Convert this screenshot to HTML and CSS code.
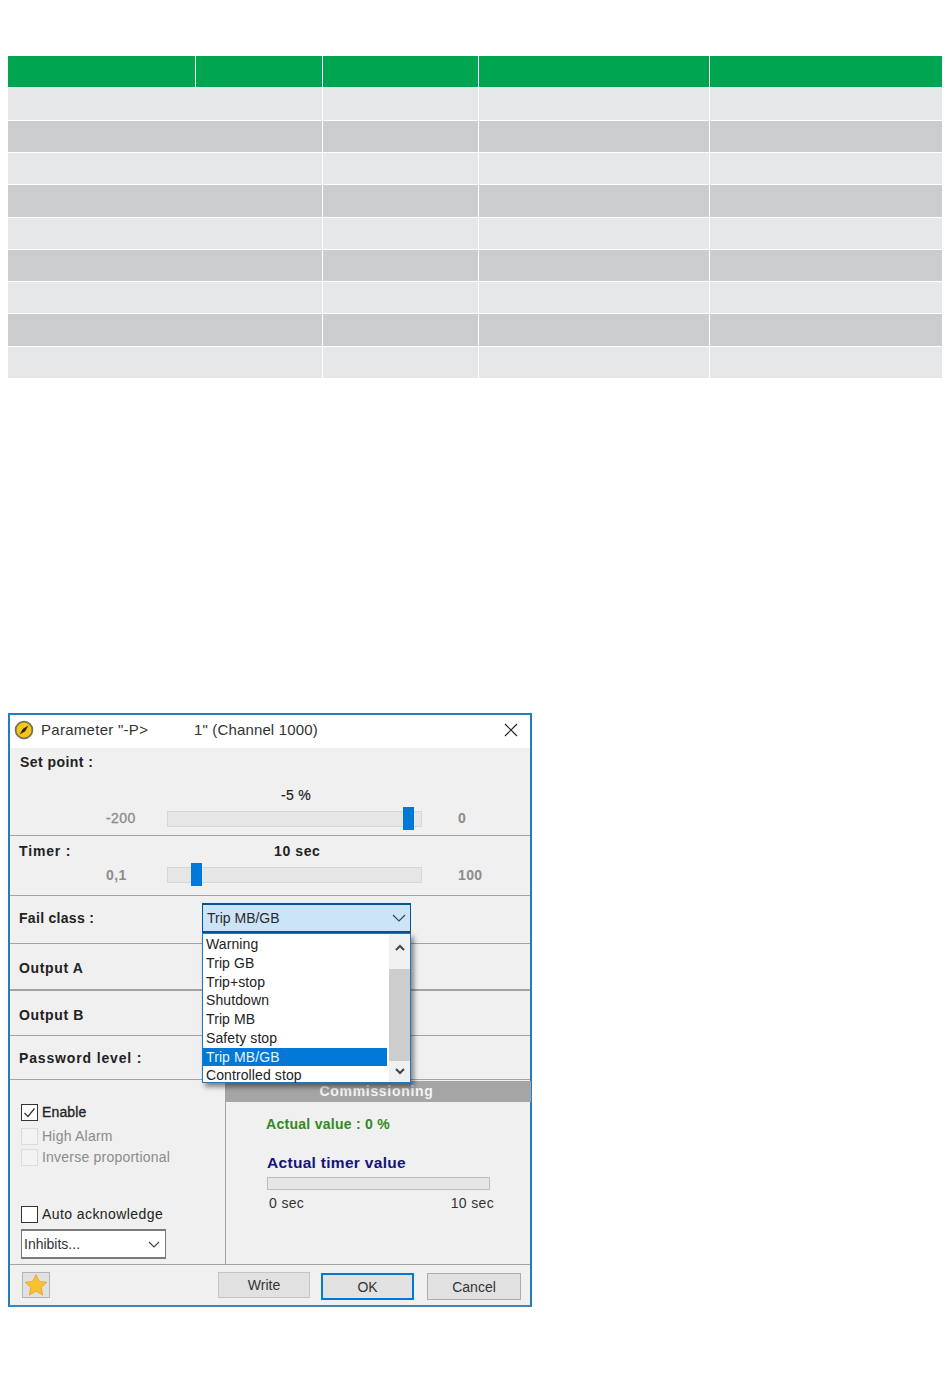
FILE: index.html
```html
<!DOCTYPE html>
<html lang="en">
<head>
<meta charset="utf-8">
<title>Parameter dialog</title>
<link rel="stylesheet" href="styles.css">
</head>
<body>
<table class="grid-table">
  <colgroup><col class="c1"><col class="c2"><col class="c3"><col class="c4"><col class="c5"></colgroup>
  <thead><tr class="h-row"><th></th><th></th><th></th><th></th><th></th></tr></thead>
  <tbody>
    <tr class="r-a h34"><td colspan="2"></td><td></td><td></td><td></td></tr>
    <tr class="r-b h32"><td colspan="2"></td><td></td><td></td><td></td></tr>
    <tr class="r-a h32"><td colspan="2"></td><td></td><td></td><td></td></tr>
    <tr class="r-b h33"><td colspan="2"></td><td></td><td></td><td></td></tr>
    <tr class="r-a h32"><td colspan="2"></td><td></td><td></td><td></td></tr>
    <tr class="r-b h32"><td colspan="2"></td><td></td><td></td><td></td></tr>
    <tr class="r-a h32"><td colspan="2"></td><td></td><td></td><td></td></tr>
    <tr class="r-b h33"><td colspan="2"></td><td></td><td></td><td></td></tr>
    <tr class="r-a h31"><td colspan="2"></td><td></td><td></td><td></td></tr>
  </tbody>
</table>

<section class="dialog">
  <header class="titlebar">
    <svg class="app-icon" width="20" height="20" viewBox="0 0 20 20" aria-hidden="true">
      <circle cx="10" cy="10" r="8.4" fill="#f5c518" stroke="#7a705c" stroke-width="1.8"/>
      <path d="M14.4 5.4 L9 8.8 L5.6 14.6 L11.2 11.2 Z" fill="#2a2418"/>
    </svg>
    <span class="title-a">Parameter "-P&gt;</span>
    <span class="title-b">1" (Channel 1000)</span>
    <svg class="close" width="14" height="14" viewBox="0 0 14 14" aria-hidden="true">
      <path d="M1 1 L13 13 M13 1 L1 13" stroke="#222" stroke-width="1.2" fill="none"/>
    </svg>
  </header>

  <div class="sec sec-setpoint">
    <div class="lbl ls-set">Set point :</div>
    <div class="value-top">-5 %</div>
    <div class="slider-row">
      <span class="min">-200</span>
      <div class="track"><span class="thumb thumb-setpoint"></span></div>
      <span class="max">0</span>
    </div>
  </div>

  <div class="sec sec-timer">
    <div class="timer-head">
      <div class="lbl lbl-tight ls-timer">Timer :</div>
      <div class="value-timer">10 sec</div>
    </div>
    <div class="slider-row">
      <span class="min min-b">0,1</span>
      <div class="track"><span class="thumb thumb-timer"></span></div>
      <span class="max">100</span>
    </div>
  </div>

  <div class="sec sec-row sec-fail">
    <div class="lbl lbl-tight lbl-col ls-fail">Fail class :</div>
    <div class="select-wrap">
      <div class="select-open">
        <span>Trip MB/GB</span>
        <svg width="14" height="8" viewBox="0 0 14 8" aria-hidden="true"><path d="M1 1 L7 7 L13 1" stroke="#33475a" stroke-width="1.2" fill="none"/></svg>
      </div>
      <div class="list">
        <ul class="items">
          <li>Warning</li>
          <li>Trip GB</li>
          <li>Trip+stop</li>
          <li>Shutdown</li>
          <li>Trip MB</li>
          <li>Safety stop</li>
          <li class="sel">Trip MB/GB</li>
          <li>Controlled stop</li>
        </ul>
        <div class="scroll">
          <svg class="sb-up" width="10" height="7" viewBox="0 0 10 7" aria-hidden="true"><path d="M1 6 L5 2 L9 6" stroke="#444" stroke-width="2" fill="none"/></svg>
          <div class="sb-thumb"></div>
          <svg class="sb-down" width="10" height="7" viewBox="0 0 10 7" aria-hidden="true"><path d="M1 1 L5 5 L9 1" stroke="#444" stroke-width="2" fill="none"/></svg>
        </div>
      </div>
    </div>
  </div>

  <div class="sec sec-row sec-a"><div class="lbl lbl-tight ls-out">Output A</div></div>
  <div class="sec sec-row sec-b"><div class="lbl lbl-tight ls-out">Output B</div></div>
  <div class="sec sec-row sec-pw"><div class="lbl lbl-tight ls-pw">Password level :</div></div>

  <div class="lower">
    <div class="lower-left">
      <label class="check"><span class="box"><svg width="15" height="15" viewBox="0 0 15 15" aria-hidden="true"><path d="M2.5 8 L6 11.5 L12.5 3.5" stroke="#333" stroke-width="1.2" fill="none"/></svg></span><span class="check-text strong">Enable</span></label>
      <label class="check off check-alarm"><span class="box"></span><span class="check-text">High Alarm</span></label>
      <label class="check off check-inv"><span class="box"></span><span class="check-text">Inverse proportional</span></label>
      <label class="check check-auto"><span class="box"></span><span class="check-text">Auto acknowledge</span></label>
      <div class="inhibits">
        <span>Inhibits...</span>
        <svg width="12" height="7" viewBox="0 0 12 7" aria-hidden="true"><path d="M1 1 L6 6 L11 1" stroke="#444" stroke-width="1.2" fill="none"/></svg>
      </div>
    </div>
    <div class="lower-right">
      <div class="comm-head">Commissioning</div>
      <div class="comm-body">
        <div class="actual">Actual value : 0 %</div>
        <div class="timer-title">Actual timer value</div>
        <div class="progress"></div>
        <div class="progress-labels"><span>0 sec</span><span>10 sec</span></div>
      </div>
    </div>
  </div>

  <footer class="footer">
    <button class="star-btn" type="button" aria-label="Favourite">
      <svg width="24" height="24" viewBox="0 0 24 24" aria-hidden="true"><path d="M12 1.5 L15.2 8.4 L22.8 9.3 L17.2 14.5 L18.7 22 L12 18.2 L5.3 22 L6.8 14.5 L1.2 9.3 L8.8 8.4 Z" fill="#f9c22e" stroke="#e8a93a" stroke-width="1"/></svg>
    </button>
    <button class="btn btn-write" type="button">Write</button>
    <button class="btn btn-ok" type="button">OK</button>
    <button class="btn btn-cancel" type="button">Cancel</button>
  </footer>
</section>
</body>
</html>
```
FILE: styles.css
```css
* { box-sizing: border-box; }
html, body { margin: 0; padding: 0; background: #fff; }
body {
  padding: 56px 8px 0;
  height: 1387px;
  overflow: hidden;
  font-family: "Liberation Sans", Arial, sans-serif;
  font-size: 14px;
  color: #222;
}

/* table */
.grid-table { width: 934px; border-collapse: separate; border-spacing: 0; table-layout: fixed; }
.c1 { width: 188px; }
.c2 { width: 127px; }
.c3 { width: 156px; }
.c4 { width: 231px; }
.c5 { width: 232px; }
.grid-table th, .grid-table td { padding: 0; border-right: 1px solid #fff; border-bottom: 1px solid #fff; }
.grid-table th:last-child, .grid-table td:last-child { border-right: 0; }
.h-row th { background: #00a551; height: 31px; border-bottom: 0; }
.r-a td { background: #e6e7e8; }
.r-b td { background: #cbcccd; }
.h34 td { height: 34px; }
.h33 td { height: 33px; }
.h32 td { height: 32px; }
.h31 td { height: 31px; border-bottom: 0; }

/* dialog */
.dialog {
  position: relative;
  width: 524px;
  height: 594px;
  margin-top: 335px;
  background: #f0f0f0;
  border: 2px solid #1f7dc0;
  border-bottom-color: #3c85b8;
  display: flex;
  flex-direction: column;
}
.titlebar {
  height: 33px;
  background: #fff;
  display: flex;
  align-items: center;
  flex: none;
  padding: 0 10px 4px 4px;
  font-size: 15px;
  color: #333;
}
.app-icon { flex: none; margin-right: 7px; }
.title-a { width: 153px; letter-spacing: .28px; white-space: nowrap; }
.title-b { flex: 1; letter-spacing: .15px; white-space: nowrap; }
.close { flex: none; margin-right: 2px; }

.sec { border-bottom: 1px solid #a3a3a3; flex: none; padding-left: 10px; }
.lbl { font-weight: 700; letter-spacing: .55px; color: #222; line-height: 16px; }
.lbl-tight { margin-left: -1px; }
.ls-set { letter-spacing: .45px; }
.ls-timer { letter-spacing: .85px; }
.ls-fail { letter-spacing: .3px; }
.ls-out { letter-spacing: .65px; }
.ls-pw { letter-spacing: .85px; }

.sec-setpoint { height: 88px; padding-top: 6px; }
.sec-setpoint .min, .sec-setpoint .max { padding-bottom: 2px; }
.value-top { width: 0; margin-left: 276px; line-height: 16px; margin-top: 17px; white-space: nowrap; display: flex; justify-content: center; letter-spacing: .3px; -webkit-text-stroke: .2px #222; }
.sec-timer { height: 60px; padding-top: 7px; }
.timer-head { display: flex; }
.timer-head .lbl { width: 255px; }
.value-timer { font-weight: 700; letter-spacing: .6px; line-height: 16px; }

.slider-row {
  display: grid;
  grid-template-columns: 147px 255px 1fr;
  grid-template-rows: 16px;
  height: 16px;
  align-items: center;
  margin-top: 8px;
  color: #8c8c8c;
  font-weight: 700;
  letter-spacing: .4px;
}
.min { padding-left: 86px; font-weight: 400; -webkit-text-stroke: .3px #8c8c8c; }
.min-b { font-weight: 700; -webkit-text-stroke: 0; }
.max { padding-left: 36px; }
.track { position: relative; height: 16px; background: #e6e6e6; border: 1px solid #d6d6d6; }
.thumb { position: absolute; top: -5px; width: 11px; height: 23px; background: #0078d7; }
.thumb-setpoint { left: 235px; }
.thumb-timer { left: 23px; }

.sec-row { display: flex; align-items: center; }
.sec-fail { height: 48px; }
.lbl-col { width: 182px; flex: none; margin-right: 1px; margin-top: -4px; }
.sec-a { height: 47px; border-bottom: 2px solid #a3a3a3; padding-top: 2px; }
.sec-b { height: 45px; padding-top: 4px; }
.sec-pw { height: 44px; }

.select-wrap { position: relative; width: 209px; margin-top: -3px; z-index: 3; }
.select-open {
  height: 30px;
  background: #cce4f7;
  border: 1px solid #005499;
  border-width: 2px 1px;
  display: flex;
  align-items: center;
  justify-content: space-between;
  padding: 0 4px;
  color: #2a2a2a;
}
.list {
  position: absolute;
  top: 30px;
  left: 0;
  width: 209px;
  height: 150px;
  background: #fff;
  border: 1px solid #1a7ac4;
  box-shadow: 3px 4px 5px rgba(0,0,0,.45);
  display: flex;
}
.items { list-style: none; margin: 0; padding: 1px 0 0; width: 184px; flex: none; }
.items li { height: 18.75px; line-height: 18.75px; padding-left: 3px; letter-spacing: .1px; color: #222; }
.items li.sel { background: #0078d7; color: #e8f3fb; }
.scroll { flex: 1; margin-left: 2px; background: #f0f0f0; position: relative; display: flex; flex-direction: column; align-items: center; }
.sb-up { margin-top: 10px; flex: none; }
.sb-thumb { width: 100%; height: 92px; background: #cdcdcd; margin-top: 18px; flex: none; }
.sb-down { margin-top: 7px; flex: none; }

.lower { display: flex; height: 185px; flex: none; border-bottom: 1px solid #a3a3a3; }
.lower-left {
  width: 216px;
  flex: none;
  border-right: 1px solid #a3a3a3;
  padding: 24px 0 0 11px;
  display: flex;
  flex-direction: column;
  align-items: flex-start;
}
.check { display: flex; align-items: center; height: 17px; }
.box { width: 17px; height: 17px; background: #fff; border: 1px solid #333; flex: none; display: flex; align-items: center; justify-content: center; }
.check-text { margin-left: 4px; letter-spacing: .42px; line-height: 17px; white-space: nowrap; }
.strong { -webkit-text-stroke: .3px #222; letter-spacing: .15px; }
.off { color: #8b8b8b; }
.off .check-text { letter-spacing: .22px; }
.off .box { border-color: #dcdcdc; background: #f3f3f3; }
.check-alarm { margin-top: 7px; }
.check-inv { margin-top: 4px; }
.check-auto { margin-top: 40px; }
.inhibits {
  width: 145px;
  height: 30px;
  margin-top: 6px;
  background: #fff;
  border: 2px solid #7a7a7a;
  border-width: 2px 1px;
  display: flex;
  align-items: center;
  justify-content: space-between;
  padding: 0 5px 0 2px;
  color: #333;
}
.lower-right { flex: 1; padding-top: 1px; }
.comm-head {
  height: 21px;
  background: #a5a5a5;
  color: #f4f4f4;
  font-weight: 700;
  letter-spacing: .7px;
  line-height: 21px;
  text-align: center;
  padding-right: 4px;
}
.comm-body { padding: 14px 37px 0 40px; }
.actual { color: #2f8a22; font-weight: 700; line-height: 16px; letter-spacing: .28px; }
.timer-title { color: #14147a; font-weight: 700; font-size: 15.5px; line-height: 18px; margin-top: 22px; margin-left: 1px; letter-spacing: .3px; white-space: nowrap; }
.progress { height: 13px; margin: 5px 0 0 1px; width: 223px; background: #e6e6e6; border: 1px solid #bdbdbd; }
.progress-labels { display: flex; justify-content: space-between; line-height: 16px; margin: 5px 0 0 3px; width: 225px; color: #333; letter-spacing: .35px; }

.footer { flex: 1; position: relative; display: flex; padding: 7px 9px 0 12px; align-items: flex-start; }
button { font: inherit; color: #333; padding: 0; }
.star-btn { width: 28px; height: 26px; background: #e1e1e1; border: 1px solid #b4b4b4; display: flex; align-items: center; justify-content: center; }
.btn { height: 27px; width: 94px; background: #e1e1e1; border: 1px solid #adadad; }
.btn-write { margin-left: auto; width: 92px; height: 26px; border-color: #c4c4c4; }
.btn-ok { margin-left: 11px; width: 93px; margin-top: 1px; border: 2px solid #0078d7; }
.btn-cancel { margin-left: 13px; margin-top: 1px; }
```
